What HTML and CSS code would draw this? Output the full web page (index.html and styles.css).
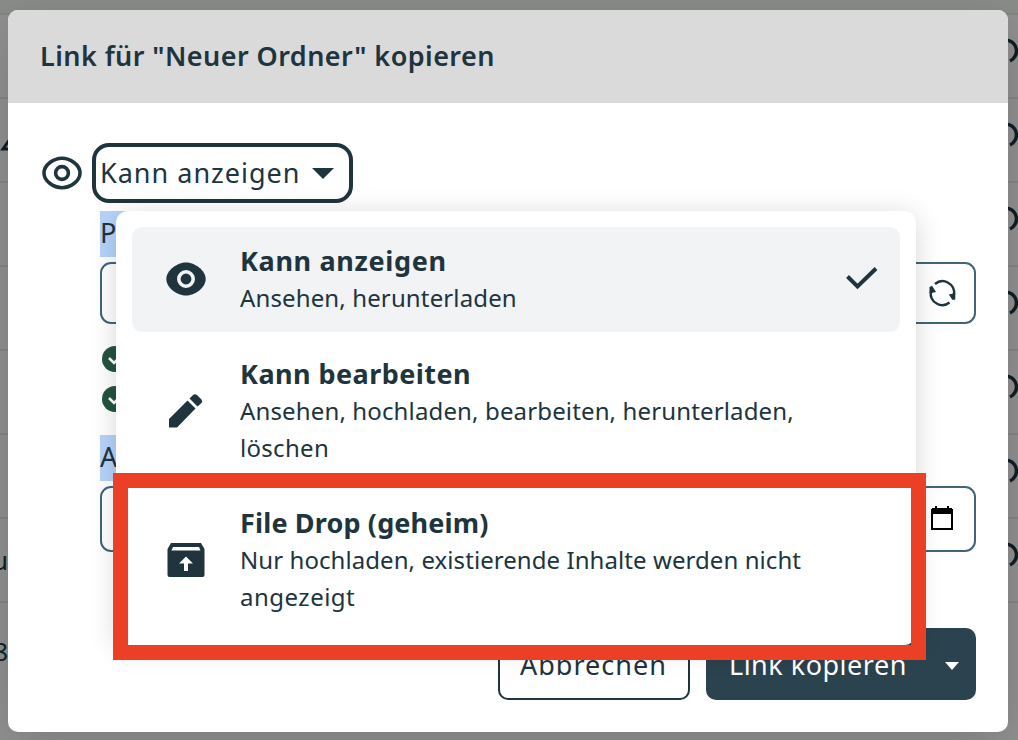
FILE: index.html
```html
<!DOCTYPE html>
<html lang="de">
<head>
<meta charset="utf-8">
<title>Link kopieren</title>
<link rel="stylesheet" href="styles.css">
</head>
<body>
<div class="stage">
  <div class="backdrop">
    <div class="bar"></div>
    <div class="row"><span></span><svg class="arc" viewBox="0 0 14 28"><path d="M0 3A11 11 0 0 1 5 24"/></svg></div>
    <div class="row"><svg class="slash" viewBox="0 0 10 14"><path d="M10 2L3 12H10"/></svg><svg class="arc" viewBox="0 0 14 28"><path d="M0 3A11 11 0 0 1 5 24"/></svg></div>
    <div class="row"><span></span><svg class="arc" viewBox="0 0 14 28"><path d="M0 3A11 11 0 0 1 5 24"/></svg></div>
    <div class="row"><span></span><svg class="arc" viewBox="0 0 14 28"><path d="M0 3A11 11 0 0 1 5 24"/></svg></div>
    <div class="row"><span></span><svg class="arc" viewBox="0 0 14 28"><path d="M0 3A11 11 0 0 1 5 24"/></svg></div>
    <div class="row"><span></span><svg class="arc" viewBox="0 0 14 28"><path d="M0 3A11 11 0 0 1 5 24"/></svg></div>
    <div class="row"><span class="cut">u</span><svg class="arc" viewBox="0 0 14 28"><path d="M0 3A11 11 0 0 1 5 24"/></svg></div>
    <div class="row last"><span class="cut">8</span></div>
  </div>
  <section class="modal">
    <header class="head"><h1 class="title">Link für "Neuer Ordner" kopieren</h1></header>
    <div class="body">
      <div class="role">
        <svg class="eye" viewBox="0 0 40 34"><path d="M20 2.300C28 2.300 38 8.500 38 17S28 31.700 20 31.700S2 25.500 2 17S12 2.300 20 2.300Z"/><circle cx="20" cy="17" r="6.400"/></svg>
        <button class="select"><span class="inner"><span class="t-select">Kann anzeigen</span><svg class="caret" viewBox="0 0 22 11"><path d="M0 0H22L11 11Z"/></svg></span></button>
      </div>
      <div class="form">
        <label class="label">Passwort</label>
        <div class="field pw">
          <svg class="refresh" viewBox="0 0 28 28"><path class="line" d="M7 5A11.600 11.600 0 0 1 26 15.500M21.500 23.500A11.600 11.600 0 0 1 2.800 13"/><path d="M20.800 15.500L27.300 14V20.500L24.500 21ZM1.500 14.500V8L4 6.800L8 13Z"/></svg>
        </div>
        <div class="checks">
          <svg class="ok" viewBox="0 0 26 26"><circle cx="13" cy="13" r="13"/><path d="M7 12L12 17L20 9"/></svg>
          <svg class="ok" viewBox="0 0 26 26"><circle cx="13" cy="13" r="13"/><path d="M7 12L12 17L20 9"/></svg>
        </div>
        <label class="label">Ablaufdatum</label>
        <div class="field date">
          <svg class="cal" viewBox="0 0 22 24"><path class="box" d="M1 4H21V23H1Z"/><path d="M1 2H21V8H1ZM4 0H6V3H4ZM16 0H18V3H16Z"/></svg>
        </div>
      </div>
      <div class="actions">
        <button class="btn cancel"><span class="t-cancel">Abbrechen</span></button>
        <button class="btn primary"><span class="t-copy">Link kopieren</span><svg class="mini" viewBox="0 0 14 8"><path d="M0 0H14L7 8Z"/></svg></button>
      </div>
    </div>
  </section>
  <div class="menu">
    <div class="item active">
      <svg class="icon" viewBox="0 0 40 34"><path d="M20 .4C28.500 .4 39.700 8 39.700 17S28.500 33.600 20 33.600S.3 26 .3 17S11.500 .4 20 .4Z"/><circle class="ring" cx="20" cy="17" r="7.200"/></svg>
      <div class="text"><strong class="t-a">Kann anzeigen</strong><span class="t-b">Ansehen, herunterladen</span></div>
      <svg class="tick" viewBox="0 0 32 24"><path d="M1.500 9.500L11.500 19.500L30 1.500"/></svg>
    </div>
    <div class="item">
      <svg class="icon" viewBox="0 0 40 34"><path d="M3 25L21.500 6.500L29.500 14.500L11 33.500H3ZM23.500 4.500L27 1Q29 -.5 31 1L35.500 5.500Q37 7.500 35.500 9L31.500 12.500Z"/></svg>
      <div class="text"><strong class="t-c">Kann bearbeiten</strong><span class="t-d">Ansehen, hochladen, bearbeiten, herunterladen,</span><span class="t-e">löschen</span></div>
    </div>
    <div class="item">
      <svg class="icon" viewBox="0 0 40 34"><path fill-rule="evenodd" d="M5 0H35L38.500 6V32Q38.500 34 36.500 34H3.500Q1.500 34 1.500 32V6ZM7 4L5.500 7.500H34.500L33 4ZM20 13.500L13 20.500H18V28H22V20.500H27Z"/></svg>
      <div class="text"><strong class="t-f">File Drop (geheim)</strong><span class="t-g">Nur hochladen, existierende Inhalte werden nicht</span><span class="t-h">angezeigt</span></div>
    </div>
  </div>
  <div class="highlight"></div>
</div>
</body>
</html>
```
FILE: styles.css
```css
* { box-sizing: border-box; }
body { margin: 0; font-family: "Noto Sans", sans-serif; color: #20343d; }
h1 { margin: 0; }
svg { display: block; overflow: visible; fill: #20343d; flex: none; }
button { font: inherit; color: inherit; margin: 0; }
.stage { position: relative; width: 1018px; height: 740px; overflow: hidden; background: #919191; display: flex; padding: 10px 10px 8px 8px; }
.backdrop { position: absolute; inset: 0; }
.bar { height: 13px; background: #8a8d8a; }
.row { height: 84px; border-top: 2px solid #858585; display: flex; align-items: center; justify-content: space-between; }
.row.last { height: 140px; align-items: flex-start; padding-top: 29px; }
.arc { width: 14px; height: 28px; fill: none; stroke: #101f26; stroke-width: 3.5; margin: 0 0 11px; }
.arc path { transform: translateX(1px); }
.slash { width: 10px; height: 14px; fill: none; stroke: #101f26; stroke-width: 3; margin-top: 8px; }
.cut { width: 8px; display: flex; justify-content: flex-end; font-size: 26px; line-height: 38px; color: #101f26; }
.modal { position: relative; flex: 1; background: #fff; border-radius: 10px; box-shadow: 0 10px 50px rgba(0,0,0,.16); }
.head { height: 93px; background: #dadada; border-radius: 10px 10px 0 0; padding: 0 32px 2px; display: flex; align-items: center; }
.title { font-size: 27px; font-weight: 600; line-height: 38px; white-space: nowrap; letter-spacing: .43px; }
.body { padding: 40px 32px 32px; }
.role { display: flex; align-items: center; gap: 10px; padding-left: 2px; }
.eye { width: 40px; height: 34px; fill: none; stroke: #20343d; stroke-width: 3.6; }
.select { width: 261px; height: 60px; border: 4px solid #20343d; border-radius: 17px; background: #fff; padding: 3px; }
.inner { display: flex; align-items: center; gap: 11px; height: 100%; border-radius: 10px; padding-left: 1px; font-size: 27px; white-space: nowrap; }
.t-select { letter-spacing: 1px; line-height: 36px; }
.caret { width: 22px; height: 11px; margin-top: 1px; }
.form { padding: 8px 0 0 60px; display: flex; flex-direction: column; align-items: flex-start; }
.label { background: #b7d3fa; height: 46px; line-height: 43px; font-size: 27px; }
.field { width: 100%; border: 2px solid #426576; border-radius: 11px; display: flex; justify-content: flex-end; align-items: center; }
.pw { margin-top: 5px; height: 62px; padding-right: 18px; }
.refresh { width: 28px; height: 28px; }
.line { fill: none; stroke: #20343d; stroke-width: 2.4; }
.checks { display: flex; flex-direction: column; gap: 14px; padding: 22px 0 23px 2px; }
.ok { width: 26px; height: 26px; fill: #245440; }
.ok path { fill: none; stroke: #fff; stroke-width: 2.5; }
.date { margin-top: 5px; height: 66px; padding: 0 21px 2px 0; }
.cal { width: 22px; height: 24px; fill: #000; }
.cal .box { fill: none; stroke: #000; stroke-width: 2; }
.actions { display: flex; justify-content: flex-end; gap: 16px; padding-top: 76px; }
.btn { height: 72px; border-radius: 10px; font-size: 27px; white-space: nowrap; display: flex; align-items: center; border: 2px solid #20343d; background: #fff; }
.cancel { width: 192px; padding: 0 0 0 20px; }
.t-cancel { letter-spacing: 1px; }
.primary { width: 270px; padding: 0 15px 0 21px; justify-content: space-between; background: #2b424f; border-color: #2b424f; color: #fff; }
.t-copy { letter-spacing: .5px; }
.mini { width: 14px; height: 8px; fill: #fff; margin-top: 3px; }
.menu { position: absolute; left: 116px; top: 211px; width: 800px; height: 434px; background: #fff; border-radius: 12px; padding: 16px; display: flex; flex-direction: column; gap: 8px; box-shadow: 0 4px 28px rgba(0,0,0,.16); }
.item { display: flex; align-items: center; padding: 15px 22px 16px 34px; gap: 34px; border-radius: 10px; flex: none; }
.item + .item + .item { margin-top: -1px; }
.active { background: #f1f3f5; }
.icon { width: 40px; height: 34px; }
.ring { stroke: #f1f3f5; stroke-width: 3.6; }
.text { flex: 1; display: flex; flex-direction: column; align-items: flex-start; font-size: 24px; line-height: 37px; white-space: nowrap; }
.text strong { font-size: 27px; font-weight: 700; }
.t-a { letter-spacing: .65px; }
.t-b { letter-spacing: .13px; }
.t-c { letter-spacing: .45px; }
.t-d { letter-spacing: .14px; }
.t-e { letter-spacing: .3px; }
.t-f { letter-spacing: .15px; }
.t-g { letter-spacing: .07px; }
.t-h { letter-spacing: .5px; }
.tick { width: 32px; height: 24px; fill: none; stroke: #20343d; stroke-width: 4; }
.highlight { position: absolute; left: 113px; top: 473px; width: 813px; height: 187px; border: 15px solid #eb4026; }
```
